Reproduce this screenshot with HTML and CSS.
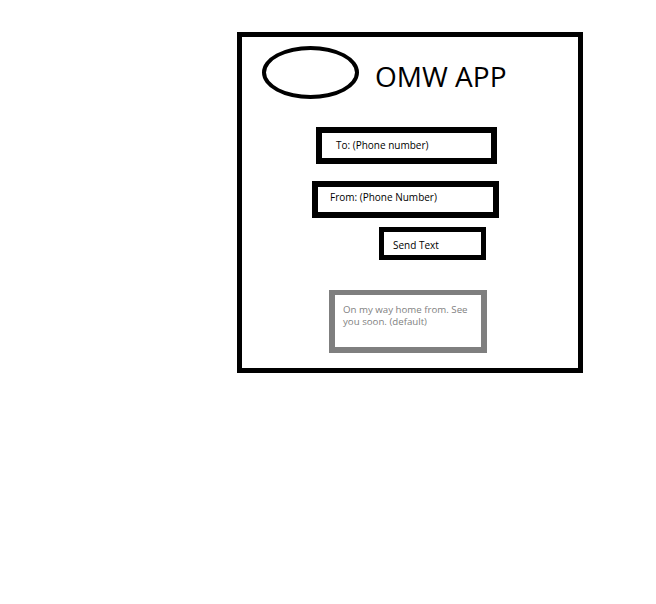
FILE: index.html
```html
<!DOCTYPE html>
<html>
<head>
<meta charset="utf-8">
<link rel="stylesheet" href="styles.css">
</head>
<body>
<div class="frame">
  <div class="header">
    <div class="logo"></div>
    <div class="title">OMW APP</div>
  </div>
  <div class="field field-to">To: (Phone number)</div>
  <div class="field field-from">From: (Phone Number)</div>
  <div class="send">Send Text</div>
  <div class="message">On my way home from. See<br>you soon. (default)</div>
</div>
</body>
</html>
```
FILE: styles.css
```css
html, body {
  margin: 0;
  padding: 0;
  background: #ffffff;
}
body {
  font-family: "Open Sans", "Noto Sans", sans-serif;
  color: #000000;
}
.frame {
  box-sizing: border-box;
  width: 346px;
  height: 341px;
  margin: 32px 0 0 237px;
  border: 5px solid #000000;
  display: flex;
  flex-direction: column;
  align-items: flex-start;
}
.header {
  display: flex;
  align-items: flex-start;
  padding: 9px 0 0 20px;
}
.logo {
  box-sizing: border-box;
  width: 97px;
  height: 53px;
  border: 4px solid #000000;
  border-radius: 50%;
}
.title {
  font-size: 28px;
  line-height: 28px;
  margin: 16px 0 0 16px;
  white-space: nowrap;
}
.field {
  box-sizing: border-box;
  height: 37px;
  border: 6px solid #000000;
  font-size: 10px;
  white-space: nowrap;
}
.field-to {
  width: 181px;
  margin: 28px 0 0 74px;
  padding-left: 14px;
  line-height: 25px;
}
.field-from {
  width: 187px;
  margin: 17px 0 0 70px;
  padding-left: 12px;
  line-height: 20px;
}
.send {
  box-sizing: border-box;
  width: 107px;
  height: 33px;
  margin: 9px 0 0 137px;
  border: 5px solid #000000;
  padding: 3px 0 0 9px;
  font-size: 10px;
  line-height: 20px;
  white-space: nowrap;
}
.message {
  box-sizing: border-box;
  width: 158px;
  height: 63px;
  margin: 30px 0 0 87px;
  border: 6px solid #7f7f7f;
  border-top-width: 5px;
  padding: 9px 0 0 8px;
  font-size: 9.7px;
  line-height: 12px;
  color: #7f7f7f;
  white-space: nowrap;
}
```
